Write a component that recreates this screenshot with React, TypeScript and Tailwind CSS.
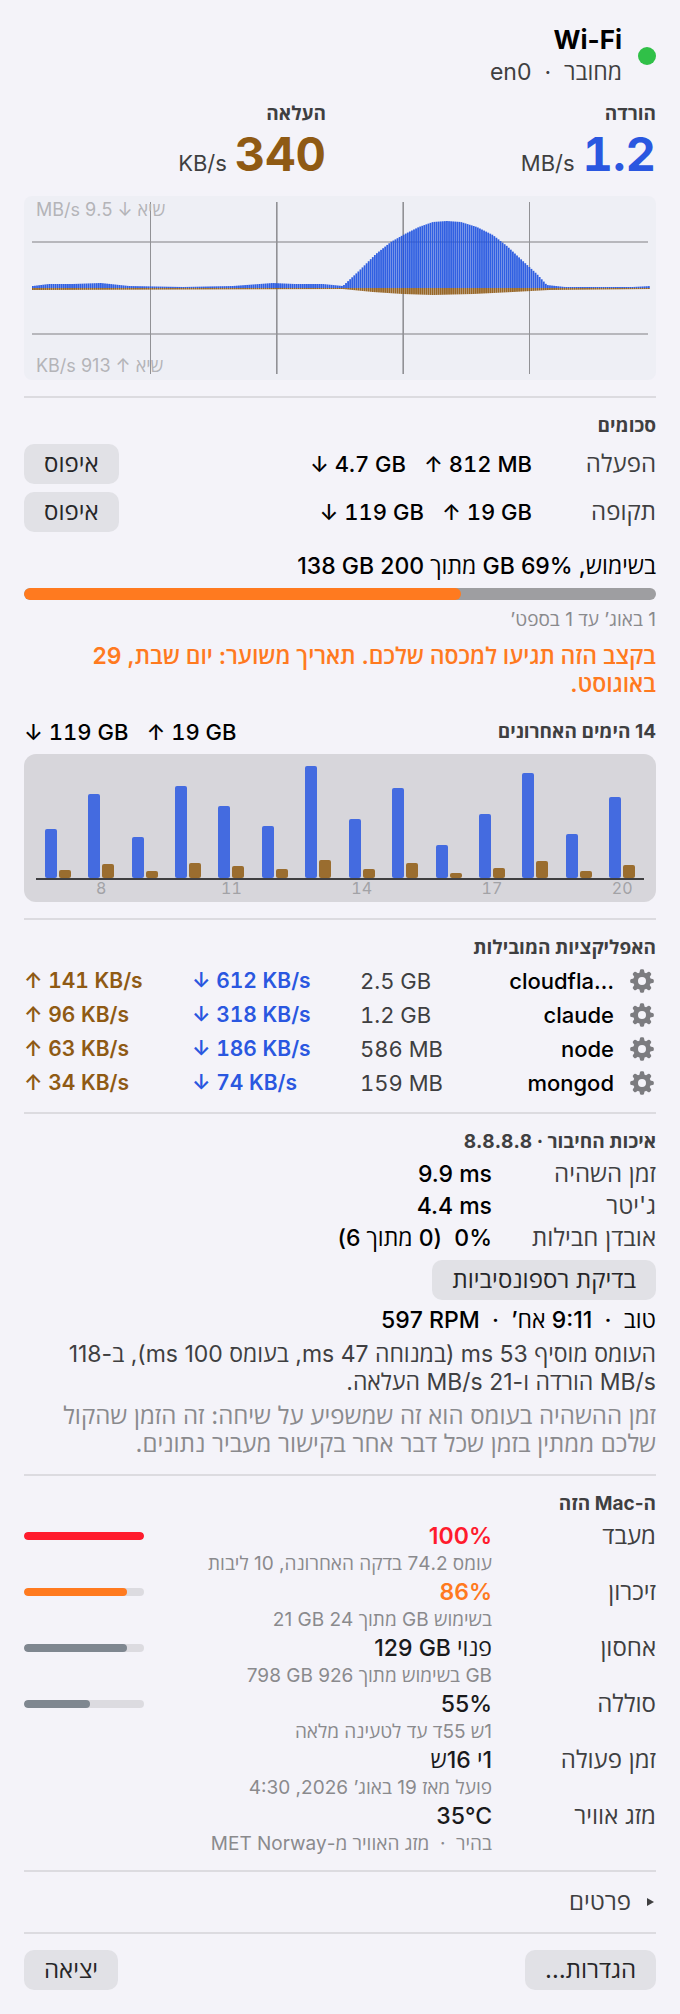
import type { ReactNode } from "react";

type Tone = "critical" | "warning" | "normal";

// Download / upload throughput curves as [x, amplitude] knots, in plot pixels.
const DOWN_KNOTS: [number, number][] = [
  [0, 2], [16, 4], [40, 4], [68, 5], [96, 2], [150, 1], [200, 2], [240, 5],
  [262, 4], [290, 4], [310, 2], [326, 17], [343, 34], [358, 46], [372, 54],
  [386, 61], [400, 66], [414, 67], [428, 66], [444, 61], [460, 53], [474, 42],
  [490, 27], [504, 14], [514, 3], [532, 1], [600, 1], [618, 2],
];
const UP_KNOTS: [number, number][] = [
  [0, 2], [310, 1], [340, 4], [370, 6], [400, 7], [440, 6], [480, 4], [516, 2], [618, 1],
];

const PLOT_WIDTH = 618;
const SAMPLE_COUNT = 300;

const DAYS = [
  { day: 7, down: 49, up: 8 },
  { day: 8, down: 84, up: 14 },
  { day: 9, down: 41, up: 7 },
  { day: 10, down: 92, up: 15 },
  { day: 11, down: 72, up: 12 },
  { day: 12, down: 52, up: 9 },
  { day: 13, down: 112, up: 18 },
  { day: 14, down: 59, up: 9 },
  { day: 15, down: 90, up: 15 },
  { day: 16, down: 33, up: 5 },
  { day: 17, down: 64, up: 10 },
  { day: 18, down: 105, up: 17 },
  { day: 19, down: 44, up: 7 },
  { day: 20, down: 81, up: 13 },
];

const APPS = [
  { name: "cloudfla…", total: "2.5 GB", down: "612 KB/s", up: "141 KB/s" },
  { name: "claude", total: "1.2 GB", down: "318 KB/s", up: "96 KB/s" },
  { name: "node", total: "586 MB", down: "186 KB/s", up: "63 KB/s" },
  { name: "mongod", total: "159 MB", down: "74 KB/s", up: "34 KB/s" },
];

interface Stat {
  label: string;
  value: string;
  detail: string;
  percent?: number;
  tone: Tone;
  /** Strings that open with a number and unit read left to right. */
  ltr?: boolean;
}

const STATS: Stat[] = [
  { label: "מעבד", value: "100%", detail: "עומס 74.2 בדקה האחרונה, 10 ליבות", percent: 100, tone: "critical" },
  { label: "זיכרון", value: "86%", detail: "21 GB מתוך 24 GB בשימוש", percent: 86, tone: "warning", ltr: true },
  { label: "אחסון", value: "129 GB פנוי", detail: "798 GB בשימוש מתוך 926 GB", percent: 86, tone: "normal", ltr: true },
  { label: "סוללה", value: "55%", detail: "1ש 55ד עד לטעינה מלאה", percent: 55, tone: "normal" },
  { label: "זמן פעולה", value: "1י 16ש", detail: "פועל מאז 19 באוג’ 2026, 4:30", tone: "normal" },
  { label: "מזג אוויר", value: "35°C", detail: "בהיר \u00a0·\u00a0 מזג האוויר מ-MET Norway", tone: "normal" },
];

const TONE_TEXT: Record<Tone, string> = {
  critical: "font-semibold text-[#ff1b2d]",
  warning: "font-semibold text-[#ff7a1f]",
  normal: "font-medium text-[#1a1a1c]",
};
const TONE_FILL: Record<Tone, string> = {
  critical: "bg-[#ff1b2d]",
  warning: "bg-[#ff7a1f]",
  normal: "bg-[#7f8790]",
};

function sample(knots: [number, number][], x: number) {
  for (let i = 1; i < knots.length; i++) {
    const [x1, y1] = knots[i];
    if (x <= x1) {
      const [x0, y0] = knots[i - 1];
      return y0 + ((y1 - y0) * (x - x0)) / (x1 - x0);
    }
  }
  return knots[knots.length - 1][1];
}

function Heading({ children }: { children: ReactNode }) {
  return <h2 className="text-[19px] leading-7 font-bold text-[#3f3f41]">{children}</h2>;
}

function Divider() {
  return <hr className="h-0.5 border-0 bg-[#dcdbe0]" />;
}

function PushButton({ children }: { children: ReactNode }) {
  return (
    <button type="button" className="h-10 rounded-[10px] bg-[#e1e1e6] px-5 text-[24px] leading-8 text-[#262628]">
      {children}
    </button>
  );
}

function Transfer({ down, up }: { down: string; up: string }) {
  return (
    <span dir="ltr" className="flex gap-[18px] font-medium text-black tabular-nums">
      <span>↓ {down}</span>
      <span>↑ {up}</span>
    </span>
  );
}

function Rate({ label, value, unit, color }: { label: string; value: string; unit: string; color: string }) {
  return (
    <div>
      <div className="text-[19px] leading-7 font-bold text-[#3f3f41]">{label}</div>
      <div className="flex items-baseline gap-2">
        <span className={`text-[47px] leading-[52px] font-bold tabular-nums ${color}`}>{value}</span>
        <span className="text-[#3f3f41]">{unit}</span>
      </div>
    </div>
  );
}

function ThroughputChart() {
  const pitch = PLOT_WIDTH / SAMPLE_COUNT;
  const slots = Array.from({ length: SAMPLE_COUNT }, (_, i) => i * pitch);
  return (
    <div className="relative rounded-lg bg-[#eeeff5]">
      <svg viewBox="0 0 632 184" className="block w-full" role="img" aria-label="הורדה והעלאה">
        <g fill="#b7b7bc">
          <rect x="8" y="45" width="616" height="2" />
          <rect x="8" y="137" width="616" height="2" />
        </g>
        <g fill="#919195">
          <rect x="126" y="6" width="1" height="172" />
          <rect x="252" y="6" width="1.6" height="172" />
          <rect x="378.4" y="6" width="1.6" height="172" />
          <rect x="505" y="6" width="1" height="172" />
        </g>
        <g fill="#2052e0" fillOpacity="0.92">
          {slots.map((x) => {
            const h = sample(DOWN_KNOTS, x);
            return <rect key={x} x={x + 8} y={92 - h} width="1.8" height={h} />;
          })}
        </g>
        <g fill="#8f5a14" fillOpacity="0.92">
          {slots.map((x) => (
            <rect key={x} x={x + 8} y="92" width="1.8" height={sample(UP_KNOTS, x)} />
          ))}
        </g>
      </svg>
      <span className="absolute top-0 left-3 text-[18px] leading-7 text-[#b4b4b8]">שיא ↓ 9.5 MB/s</span>
      <span className="absolute bottom-0 left-3 text-[18px] leading-7 text-[#b4b4b8]">שיא ↑ 913 KB/s</span>
    </div>
  );
}

function DailyChart() {
  return (
    <div dir="ltr" className="rounded-xl bg-[#d7d6db] px-3 pt-3">
      <div className="box-content flex h-28 items-end border-b-2 border-[#3f3f41]">
        {DAYS.map(({ day, down, up }) => (
          <div key={day} className="flex flex-1 items-end justify-center gap-0.5">
            <div className="w-3 rounded-xs bg-[#446be0]" style={{ height: down }} />
            <div className="w-3 rounded-xs bg-[#9a6d2f]" style={{ height: up }} />
          </div>
        ))}
      </div>
      <div className="flex h-[22px] text-center text-[16px] leading-4 text-[#a2a2a6] tabular-nums">
        {DAYS.map(({ day }) => (
          <span key={day} className="flex-1">
            {day % 3 === 2 ? day : ""}
          </span>
        ))}
      </div>
    </div>
  );
}

function Gear() {
  const teeth = [0, 45, 90, 135, 180, 225, 270, 315];
  return (
    <svg viewBox="0 0 24 24" className="block size-6" aria-hidden="true">
      <g fill="#7c7c80">
        {teeth.map((angle) => (
          <path key={angle} d="M9.2 5 9.9 1.4Q10.1.2 11.2.2h1.6q1.1 0 1.3 1.2L14.8 5z" transform={`rotate(${angle} 12 12)`} />
        ))}
      </g>
      <circle cx="12" cy="12" r="6.4" fill="none" stroke="#7c7c80" strokeWidth="4.8" />
    </svg>
  );
}

function QualityRow({ label, children }: { label: string; children: ReactNode }) {
  return (
    <div className="flex">
      <dt className="w-41 shrink-0 text-[24px] leading-8 text-[#3f3f41]">{label}</dt>
      <dd className="text-[23px] leading-8 font-medium text-black">{children}</dd>
    </div>
  );
}

function StatRow({ label, value, detail, percent, tone, ltr }: Stat) {
  const dir = ltr ? "ltr" : "rtl";
  return (
    <div className="flex h-14">
      <div className="w-41 shrink-0 text-[24px] leading-8 text-[#3f3f41]">{label}</div>
      <div className="flex-1">
        <div className="flex items-center justify-between">
          <span dir={dir} className={`text-[23px] leading-8 ${TONE_TEXT[tone]}`}>
            {value}
          </span>
          {percent !== undefined && (
            <div dir="ltr" className="h-2 w-30 overflow-hidden rounded-full bg-[#dcdbe0]">
              <div className={`h-full rounded-full ${TONE_FILL[tone]}`} style={{ width: `${percent}%` }} />
            </div>
          )}
        </div>
        <div dir={dir} className="text-right text-[19px] leading-6 text-[#8a8a8d]">
          {detail}
        </div>
      </div>
    </div>
  );
}

export default function App() {
  return (
    <main
      dir="rtl"
      lang="he"
      className="bg-[#f4f3f9] p-6 font-['Inter','Open_Sans','Noto_Sans',sans-serif] text-[22px] leading-8"
    >
      <header className="flex items-center gap-4">
        <span className="size-[18px] rounded-full bg-[#30c048]" />
        <div>
          <h1 className="text-[26px] leading-8 font-bold text-black">Wi-Fi</h1>
          <p className="text-[23px] leading-8 text-[#3f3f41]">מחובר &nbsp;·&nbsp; en0</p>
        </div>
      </header>

      <section className="mt-3 mb-4 grid grid-cols-2 gap-7">
        <Rate label="הורדה" value="1.2" unit="MB/s" color="text-[#2a57e0]" />
        <Rate label="העלאה" value="340" unit="KB/s" color="text-[#8f5a14]" />
      </section>

      <ThroughputChart />

      <div className="mt-4">
        <Divider />
      </div>

      <section className="pt-[14px] pb-4">
        <Heading>סכומים</Heading>
        <div className="mt-1 flex flex-col gap-2">
          <div className="flex items-center">
            <span className="w-31 shrink-0 text-[24px] leading-8 text-[#3f3f41]">הפעלה</span>
            <Transfer down="4.7 GB" up="812 MB" />
            <span className="grow" />
            <PushButton>איפוס</PushButton>
          </div>
          <div className="flex items-center">
            <span className="w-31 shrink-0 text-[24px] leading-8 text-[#3f3f41]">תקופה</span>
            <Transfer down="119 GB" up="19 GB" />
            <span className="grow" />
            <PushButton>איפוס</PushButton>
          </div>
        </div>

        <p dir="ltr" className="mt-[18px] text-right text-[23px] leading-8 font-medium text-black">
          138 GB מתוך 200 GB בשימוש, 69%
        </p>
        <div dir="ltr" className="mt-[6px] h-3 overflow-hidden rounded-full bg-[#9e9ea1]">
          <div className="h-full rounded-full bg-[#ff7a1f]" style={{ width: "69.2%" }} />
        </div>
        <p className="mt-2 text-[19px] leading-6 text-[#8a8a8d]">1 באוג’ עד 1 בספט’</p>
        <p className="mt-[10px] text-[23px] leading-7 font-semibold text-[#ff7a1f]">
          בקצב הזה תגיעו למכסה שלכם. תאריך משוער: יום שבת, 29 באוגוסט.
        </p>

        <div className="mt-[18px] mb-[6px] flex items-center justify-between">
          <Heading>14 הימים האחרונים</Heading>
          <Transfer down="119 GB" up="19 GB" />
        </div>
        <DailyChart />
      </section>

      <Divider />

      <section className="pt-[14px] pb-3">
        <Heading>האפליקציות המובילות</Heading>
        <table className="mt-[2px] w-full table-fixed tabular-nums">
          <colgroup>
            <col className="w-[42px]" />
            <col />
            <col className="w-36" />
            <col className="w-42" />
            <col className="w-42" />
          </colgroup>
          <tbody>
            {APPS.map(({ name, total, down, up }) => (
              <tr key={name} dir="ltr" className="h-[34px] text-left">
                <td className="pl-4">
                  <Gear />
                </td>
                <td className="text-right font-medium whitespace-nowrap text-black">{name}</td>
                <td className="text-[#3f3f41]">{total}</td>
                <td className="text-[21px] leading-8 font-semibold text-[#2a57e0]">↓ {down}</td>
                <td className="text-[21px] leading-8 font-semibold text-[#8f5a14]">↑ {up}</td>
              </tr>
            ))}
          </tbody>
        </table>
      </section>

      <Divider />

      <section className="pt-[14px] pb-4">
        <Heading>איכות החיבור · 8.8.8.8</Heading>
        <dl className="mt-[2px]">
          <QualityRow label="זמן השהיה">
            <bdi>9.9 ms</bdi>
          </QualityRow>
          <QualityRow label="ג'יטר">
            <bdi>4.4 ms</bdi>
          </QualityRow>
          <QualityRow label="אובדן חבילות">0% &nbsp;(0 מתוך 6)</QualityRow>
        </dl>
        <div className="mt-[6px] flex">
          <PushButton>בדיקת רספונסיביות</PushButton>
        </div>
        <p className="mt-1 text-[23px] leading-8 font-medium text-black">
          טוב &nbsp;·&nbsp; 9:11 אח’ &nbsp;·&nbsp; <bdi>597 RPM</bdi>
        </p>
        <p className="mt-1 text-[23px] leading-7 text-[#3f3f41]">
          העומס מוסיף 53 ms (במנוחה 47 ms, בעומס 100 ms), ב-118 MB/s הורדה ו-21 MB/s העלאה.
        </p>
        <p className="mt-[6px] text-[24px] leading-7 text-[#8a8a8d]">
          זמן ההשהיה בעומס הוא זה שמשפיע על שיחה: זה הזמן שהקול שלכם ממתין בזמן שכל דבר אחר בקישור מעביר נתונים.
        </p>
      </section>

      <Divider />

      <section className="py-[14px]">
        <Heading>ה-Mac הזה</Heading>
        <div className="mt-[2px]">
          {STATS.map((stat) => (
            <StatRow key={stat.label} {...stat} />
          ))}
        </div>
      </section>

      <Divider />

      <details className="py-[14px]">
        <summary className="flex list-none items-center gap-4 px-0.5 text-[24px] leading-8 font-medium text-[#3f3f41]">
          <svg viewBox="0 0 7 8" className="h-2 w-[7px]" aria-hidden="true">
            <path d="M0 0 7 4 0 8z" fill="currentColor" />
          </svg>
          פרטים
        </summary>
      </details>

      <Divider />

      <footer className="mt-4 flex justify-between">
        <PushButton>הגדרות…</PushButton>
        <PushButton>יציאה</PushButton>
      </footer>
    </main>
  );
}
